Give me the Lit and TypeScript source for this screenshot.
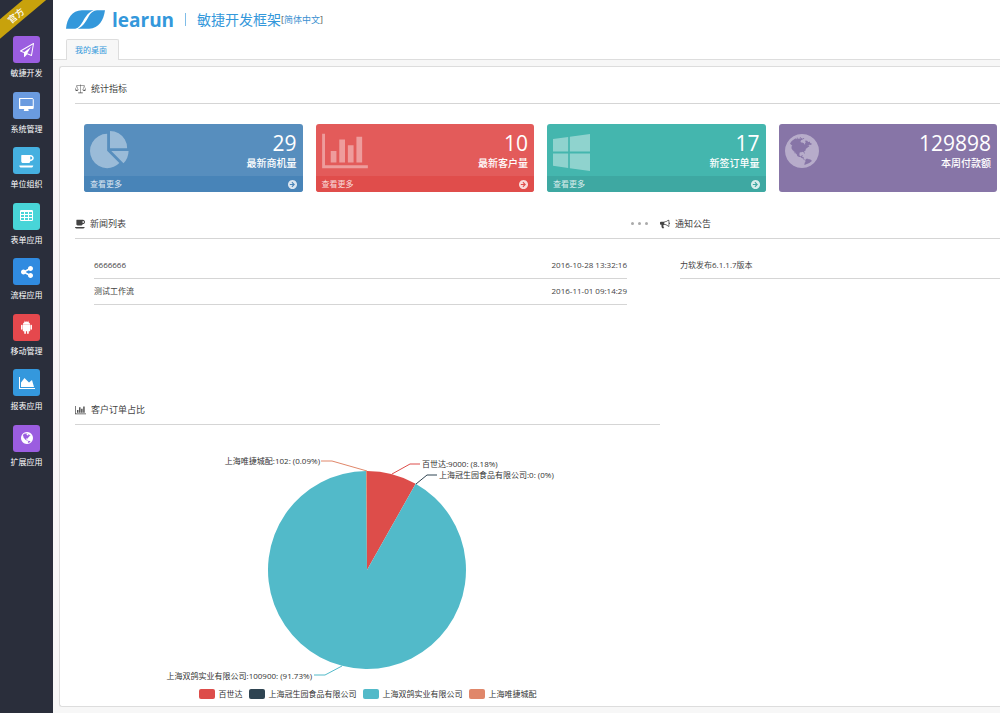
import { LitElement, html, css, svg, nothing } from "lit";
import { customElement, property } from "lit/decorators.js";

type Icon = { box: string; d: string };

const GLOBE =
  "M896 128q209 0 385.500 103t279.500 279.500 103 385.500-103 385.500-279.500 279.500-385.500 103-385.500-103-279.500-279.500-103-385.500 103-385.500 279.500-279.500 385.500-103zm274 521q-2 1-9.500 9.500t-13.500 9.500q2 0 4.500-5t5-11 3.500-7q6-7 22-15 14-6 52-12 34-8 51 11-2-2 9.500-13t14.500-12q3-2 15-4.500t15-7.500l2-22q-12 1-17.500-7t-6.500-21q0 2-6 8 0-7-4.500-8t-11.500 1-9 1q-10-3-15-7.500t-8-16.500-4-15q-2-5-9.500-11t-9.500-10q-1-2-2.500-5.500t-3-6.500-4-5.500-5.500-2.500-7 5-7.500 10-4.500 5q-3-2-6-1.500t-4.500 1-4.500 3-5 3.500q-3 2-8.500 3t-8.500 2q15-5-1-11-10-4-16-3 9-4 7.500-12t-8.500-14h5q-1-4-8.500-8.500t-17.500-8.500-13-6q-8-5-34-9.500t-33-.5q-5 6-4.500 10.500t4 14 3.500 12.500q1 6-5.500 13t-6.500 12q0 7 14 15.500t10 21.500q-3 8-16 16t-16 12q-5 8-1.500 18.500t10.500 16.500q2 2 1.500 4t-3.500 4.500-5.500 4-6.500 3.500l-3 2q-11 5-20.500-6t-13.500-26q-7-25-16-30-23-8-29 1-5-13-41-26-25-9-58-4 6-1 0-15-7-15-19-12 3-6 4-17.500t1-13.500q3-13 12-23 1-1 7-8.500t9.500-13.500.5-6q35 4 50-11 5-5 11.500-17t10.500-17q9-6 14-5.500t14.500 5.500 14.500 5q14 1 15.500-11t-7.500-20q12 1 3-17-4-7-8-9-12-4-27 5-8 4 2 8-1-1-9.500 10.500t-16.500 17.500-16-5q-1-1-5.500-13.500t-9.500-13.500q-8 0-16 15 3-8-11-15t-24-8q19-12-8-27-7-4-20.500-5t-19.500 4q-5 7-5.500 11.500t5 8 10.500 5.500 11.500 4 8.500 3q14 10 8 14-2 1-8.500 3.500t-11.500 4.500-6 4q-3 4 0 14t-2 14q-5-5-9-17.500t-7-16.500q7 9-25 6l-10-1q-4 0-16 2t-20.500 1-13.500-8q-4-8 0-20 1-4 4-2-4-3-11-9.500t-10-8.500q-46 15-94 41 6 1 12-1 5-2 13-6.500t10-5.500q34-14 42-7l5-5q14 16 20 25-7-4-30-1-20 6-22 12 7 12 5 18-4-3-11.500-10t-14.500-11-15-5q-16 0-22 1-146 80-235 222 7 7 12 8 4 1 5 9t2.500 11 11.500-3q9 8 3 19 1-1 44 27 19 17 21 21 3 11-10 18-1-2-9-9t-9-4q-3 5 .5 18.500t10.500 12.500q-7 0-9.500 16t-2.500 35.500-1 23.500l2 1q-3 12 5.500 34.500t21.500 19.500q-13 3 20 43 6 8 8 9 3 2 12 7.500t15 10 10 10.500q4 5 10 22.500t14 23.500q-2 6 9.500 20t10.500 23q-1 0-2.500 1t-2.500 1q3 7 15.500 14t15.500 13q1 3 2 10t3 11 8 2q2-20-24-62-15-25-17-29-3-5-5.500-15.500t-4.500-14.500q2 0 6 1.500t8.500 3.500 7.500 4 2 3q-3 7 2 17.500t12 18.500 17 19 12 13q6 6 14 19.500t0 13.500q9 0 20 10.500t17 19.500q5 8 8 26t5 24q2 7 8.500 13.500t12.500 9.500l16 8 13 7q5 2 18.500 10.500t21.500 11.500q10 4 16 4t14.500-2.500 13.500-3.500q15-2 29 15t21 21q36 19 55 11-2 1 .5 7.500t8 15.500 9 14.500 5.500 8.500q5 6 18 15t18 15q6-4 7-9-3 8 7 20t18 10q14-3 14-32-31 15-49-18 0-1-2.500-5.500t-4-8.500-2.500-8.500 0-7.500 5-3q9 0 10-3.500t-2-12.500-4-13q-1-8-11-20t-12-15q-5 9-16 8t-16-9q0 1-1.500 5.500t-1.500 6.500q-13 0-15-1 1-3 2.500-17.500t3.500-22.500q1-4 5.500-12t7.500-14.500 4-12.500-4.500-9.500-17.500-2.500q-19 1-26 20-1 3-3 10.500t-5 11.500-9 7q-7 3-24 2t-24-5q-13-8-22.500-29t-9.500-37q0-10 2.500-26.500t3-25-5.500-24.500q3-2 9-9.500t10-10.500q2-1 4.500-1.500t4.500 0 4-1.500 3-6q-1-1-4-3-3-3-4-3 7 3 28.500-1.500t27.500 1.500q15 11 22-2 0-1-2.500-9.500t-.5-13.500q5 27 29 9 3 3 15.500 5t17.500 5q3 2 7 5.500t5.500 4.500 5-.5 8.500-6.500q10 14 12 24 11 40 19 44 7 3 11 2t4.500-9.500 0-14-1.500-12.500l-1-8v-18l-1-8q-15-3-18.500-12t1.500-18.500 15-18.500q1-1 8-3.500t15.500-6.500 12.500-8q21-19 15-35 7 0 11-9-1 0-5-3t-7.500-5-4.500-2q9-5 2-16 5-3 7.500-11t7.500-10q9 12 21 2 8-8 1-16 5-7 20.500-10.500t18.500-9.500q7 2 8-2t1-12 3-12q4-5 15-9t13-5l17-11q3-4 0-4 18 2 31-11 10-11-6-20 3-6-3-9.500t-15-5.500q3-1 11.500-.5t10.500-1.500q15-10-7-16-17-5-43 12zm-163 877q206-36 351-189-3-3-12.500-4.500t-12.500-3.500q-18-7-24-8 1-7-2.500-13t-8-9-12.500-8-11-7q-2-2-7-6t-7-5.500-7.500-4.500-8.500-2-10 1l-3 1q-3 1-5.500 2.500t-5.500 3-4 3 0 2.500q-21-17-36-22-5-1-11-5.500t-10.500-7-10-1.500-11.500 7q-5 5-6 15t-2 13q-7-5 0-17.500t2-18.500q-3-6-10.500-4.500t-12 4.500-11.500 8.500-9 6.500-8.500 5.500-8.500 7.500q-3 4-6 12t-5 11q-2-4-11.500-6.500t-9.500-5.500q2 10 4 35t5 38q7 31-12 48-27 25-29 40-4 22 12 26 0 7-8 20.500t-7 21.500q0 6 2 16z";

const ICONS: Record<string, Icon> = {
  plane: {
    box: "0 0 1792 1792",
    d: "M1764 11q33 24 27 64l-256 1536q-5 29-32 45-14 8-31 8-11 0-24-5l-527-215-298 327q-18 21-47 21-14 0-23-4-19-7-30-23.500t-11-36.500v-452l-472-193q-37-14-40-55-3-39 32-59l1664-960q35-21 68 2zm-342 1499l221-1323-1434 827 336 137 863-639-478 797z",
  },
  desktop: {
    box: "0 0 1856 1792",
    d: "M1728 992v-832q0-13-9.500-22.500t-22.500-9.500h-1536q-13 0-22.500 9.500t-9.500 22.500v832q0 13 9.500 22.500t22.500 9.500h1536q13 0 22.500-9.500t9.500-22.500zm128-832v1088q0 66-47 113t-113 47h-544q0 37 16 77.500t32 71 16 43.500q0 26-19 45t-45 19h-512q-26 0-45-19t-19-45q0-14 16-44t32-70 16-78h-544q-66 0-113-47t-47-113v-1088q0-66 47-113t113-47h1536q66 0 113 47t47 113z",
  },
  coffee: {
    box: "0 0 1856 1792",
    d: "M1664 512q0-80-56-136t-136-56h-64v384h64q80 0 136-56t56-136zm-1664 960h1792q0 106-75 181t-181 75h-1280q-106 0-181-75t-75-181zm1856-960q0 159-112.500 271.500t-271.500 112.500h-64v32q0 92-66 158t-158 66h-704q-92 0-158-66t-66-158v-736q0-26 19-45t45-19h1152q159 0 271.500 112.500t112.500 271.500z",
  },
  table: {
    box: "64 0 1664 1792",
    d: "M224 128h1344q160 0 160 160v1088q0 160-160 160h-1344q-160 0-160-160v-1088q0-160 160-160zM192 384v256h384v-256zM704 384v256h384v-256zM1216 384v256h384v-256zM192 768v256h384v-256zM704 768v256h384v-256zM1216 768v256h384v-256zM192 1152v256h384v-256zM704 1152v256h384v-256zM1216 1152v256h384v-256z",
  },
  share: {
    box: "128 0 1536 1792",
    d: "M1344 1024q133 0 226.500 93.500t93.500 226.500-93.500 226.500-226.500 93.500-226.500-93.500-93.500-226.500q0-12 2-34l-360-180q-92 86-218 86-133 0-226.500-93.500t-93.500-226.500 93.500-226.500 226.500-93.500q126 0 218 86l360-180q-2-22-2-34 0-133 93.500-226.500t226.500-93.500 226.500 93.500 93.500 226.500-93.500 226.500-226.500 93.500q-126 0-218-86l-360 180q2 22 2 34t-2 34l360 180q92-86 218-86z",
  },
  android: {
    box: "192 0 1408 1792",
    d: "M420 590h952q-10-230-230-350l70-130-40-20-72 134q-98-46-204-46t-204 46l-72-134-40 20 70 130q-230 120-230 350zM420 620h952v710q0 110-110 110h-76v230q0 108-108 108t-108-108v-230h-148v230q0 108-108 108t-108-108v-230h-76q-110 0-110-110zM286 620q90 0 90 90v440q0 90-90 90t-90-90v-440q0-90 90-90zM1506 620q90 0 90 90v440q0 90-90 90t-90-90v-440q0-90 90-90z",
  },
  area: {
    box: "0 0 2048 1792",
    d: "M2048 1536v128h-2048v-1536h128v1408h1920zm-384-1024l256 896h-1664v-576l448-576 576 576z",
  },
  globe: { box: "128 0 1536 1792", d: GLOBE },
  pie: {
    box: "0 0 1792 1792",
    d: "M768 890l546 546q-106 108-247.500 168t-298.500 60q-209 0-385.500-103t-279.500-279.500-103-385.500 103-385.500 279.500-279.500 385.500-103v762zm187 6h773q0 157-60 298.500t-168 247.500zm709-128h-768v-768q209 0 385.500 103t279.500 279.500 103 385.500z",
  },
  bars: {
    box: "0 0 2048 1792",
    d: "M640 896v512h-256v-512h256zm384-512v1024h-256v-1024h256zm1024 1152v128h-2048v-1536h128v1408h1920zm-640-896v768h-256v-768h256zm384-384v1152h-256v-1152h256z",
  },
  windows: {
    box: "64 0 1664 1792",
    d: "M746 1006v651l-682-94v-557h682zm0-743v659h-682v-565zm982 743v786l-907-125v-661h907zm0-878v794h-907v-669z",
  },
  bullhorn: {
    box: "0 0 1792 1792",
    d: "M1664 640q53 0 90.500 37.500t37.500 90.500-37.500 90.500-90.500 37.500v384q0 52-38 90t-90 38q-417-347-812-380-58 19-91 66t-31 100.500 40 92.500q-20 33-23 65.500t6 58 33.500 55 48 50 61.500 50.500q-29 58-111.500 83t-168.500 11.500-132-55.500q-7-23-29.500-87.500t-32-94.500-23-89-15-101 3.500-98.500 22-110.500h-122q-66 0-113-47t-47-113v-192q0-66 47-113t113-47h480q435 0 896-384 52 0 90 38t38 90v384zm-128 604v-954q-394 302-768 343v270q377 42 768 341z",
  },
  scale: {
    box: "0 0 2048 1792",
    d: "M980 60h88v120h700v96h-20l292 780q-20 200-316 200t-316-200l284-780h-624v1290h380v100h-848v-100h380v-1290h-624l284 780q-20 200-316 200t-316-200l292-780h-20v-96h700zM324 380l-240 660h480zM1724 380l-240 660h480z",
  },
  arrow: {
    box: "128 128 1536 1536",
    d: "M896 128a768 768 0 1 0 1 0zM860 440l450 456-450 456-130-130 220-220h-510v-212h510l-220-220z",
  },
};

@customElement("fa-icon")
class FaIcon extends LitElement {
  @property() name = "";
  @property({ type: Number }) size = 14;

  static styles = css`
    :host { display: flex; }
    svg { display: block; fill: currentColor; fill-rule: evenodd; }
  `;

  render() {
    const icon = ICONS[this.name];
    if (!icon) return nothing;
    const [, , w, h] = icon.box.split(" ").map(Number);
    return html`<svg
      viewBox=${icon.box}
      width=${Math.round((this.size * w) / h)}
      height=${this.size}
      aria-hidden="true"
    ><path d=${icon.d}></path></svg>`;
  }
}

const MENU = [
  { icon: "plane", label: "敏捷开发", tone: "#9b5de0" },
  { icon: "desktop", label: "系统管理", tone: "#6a9be0" },
  { icon: "coffee", label: "单位组织", tone: "#45b0e0" },
  { icon: "table", label: "表单应用", tone: "#48d5d8" },
  { icon: "share", label: "流程应用", tone: "#308be0" },
  { icon: "android", label: "移动管理", tone: "#e5484d" },
  { icon: "area", label: "报表应用", tone: "#3498dd" },
  { icon: "globe", label: "扩展应用", tone: "#9b5de0" },
];

const CARDS = [
  { icon: "pie", value: "29", label: "最新商机量", tone: "blue", more: true },
  { icon: "bars", value: "10", label: "最新客户量", tone: "red", more: true },
  { icon: "windows", value: "17", label: "新签订单量", tone: "teal", more: true },
  { icon: "globe", value: "129898", label: "本周付款额", tone: "purple", more: false },
];

const NEWS = [
  { title: "6666666", time: "2016-10-28 13:32:16" },
  { title: "测试工作流", time: "2016-11-01 09:14:29" },
];

const SERIES = [
  { name: "百世达", color: "#dd4d4a" },
  { name: "上海冠生园食品有限公司", color: "#2f4452" },
  { name: "上海双鸽实业有限公司", color: "#52bac9" },
  { name: "上海唯捷城配", color: "#e0876a" },
];

@customElement("order-chart")
class OrderChart extends LitElement {
  static styles = css`
    :host { display: block; }
    .plot { display: block; width: 100%; height: 255px; overflow: visible; }
    .plot text { font-size: 8px; fill: #333; }
    .lead { fill: none; stroke-width: 1; }
    .legend {
      display: flex; justify-content: center; gap: 6px;
      margin: 0; padding: 8px 0 6px; list-style: none;
      font-size: 8px; line-height: 12px; color: #333;
    }
    .key { display: flex; align-items: center; gap: 4px; }
    .swatch { width: 16px; height: 10px; border-radius: 2px; }
  `;

  private slice(from: number, to: number, color: string) {
    const cx = 292, cy = 145, r = 99;
    const at = (f: number) => {
      const a = f * 2 * Math.PI;
      return `${(cx + r * Math.sin(a)).toFixed(2)} ${(cy - r * Math.cos(a)).toFixed(2)}`;
    };
    return svg`<path fill=${color}
      d=${`M${cx} ${cy}L${at(from)}A${r} ${r} 0 ${to - from > 0.5 ? 1 : 0} 1 ${at(to)}Z`}></path>`;
  }

  render() {
    const [red, dark, teal, orange] = SERIES.map((s) => s.color);
    return html`
      <svg class="plot" viewBox="0 0 585 255" role="img" aria-label="客户订单占比">
        ${this.slice(0, 0.0818, red)}
        ${this.slice(0.0818, 0.9991, teal)}
        ${this.slice(0.9985, 1, orange)}
        <path class="lead" stroke=${orange} d="M246 36h11l35 10"></path>
        <path class="lead" stroke=${red} d="M317 49l18-10h10"></path>
        <path class="lead" stroke=${dark} d="M341 59l11-9h10"></path>
        <path class="lead" stroke=${teal} d="M239 250h11l17-9"></path>
        <text x="245" y="39" text-anchor="end">上海唯捷城配:102: (0.09%)</text>
        <text x="347" y="42">百世达:9000: (8.18%)</text>
        <text x="364" y="53">上海冠生园食品有限公司:0: (0%)</text>
        <text x="237" y="254" text-anchor="end">上海双鸽实业有限公司:100900: (91.73%)</text>
      </svg>
      <ul class="legend">
        ${SERIES.map(
          (s) => html`<li class="key">
            <span class="swatch" style="background:${s.color}"></span>${s.name}
          </li>`
        )}
      </ul>
    `;
  }
}

@customElement("app-root")
class AppRoot extends LitElement {
  static styles = css`
    :host {
      display: flex; min-height: 100vh; overflow: hidden;
      font-family: "Open Sans", "Noto Sans CJK SC", sans-serif;
      font-size: 8px; line-height: 12px; color: #444; background: #f7f7f7;
    }
    * { box-sizing: border-box; }
    a { color: inherit; text-decoration: none; }
    button { padding: 0; border: 0; background: none; font: inherit; color: inherit; }

    .side {
      position: relative; flex: none; width: 53px; padding-top: 36px;
      overflow: hidden; background: #2a2e3b; color: #fff;
    }
    .ribbon {
      position: absolute; left: -24px; top: 8px; width: 80px; height: 15px;
      transform: rotate(-40deg); background: #c8a20c;
      font-size: 9px; line-height: 15px; font-weight: 500; text-align: center;
    }
    .menu { display: grid; grid-auto-rows: 1fr; height: 444px; }
    .entry { display: flex; flex-direction: column; align-items: center; gap: 4px; }
    .tile {
      display: flex; align-items: center; justify-content: center;
      width: 27px; height: 27px; border-radius: 3px;
    }

    .main { flex: 1; min-width: 0; display: flex; flex-direction: column; }
    .top { background: #fff; border-bottom: 1px solid #ddd; padding-left: 13px; }
    .brand { display: flex; align-items: center; height: 39px; color: #3498db; }
    .mark { display: block; width: 39px; height: 19px; fill: currentColor; }
    .name { margin: 0 0 0 7px; font-size: 19px; line-height: 24px; font-weight: 700; }
    .rule { width: 1px; height: 13px; margin: 0 11px; background: #7fbde8; }
    .product { font-size: 14px; line-height: 20px; }
    .lang { font-size: 9px; line-height: 14px; color: #555; }
    .lang a { color: #3b8fd0; }
    .tabs { display: flex; margin-bottom: -1px; }
    .tab {
      height: 21px; padding: 0 11px 0 8px; border: 1px solid #ddd; border-bottom: 0;
      border-radius: 2px 2px 0 0; background: #f7f7f7; color: #3498db; line-height: 20px;
    }

    .panel {
      flex: 1; margin: 6px 0 6px 6px; padding: 7px 0 0 15px;
      border: 1px solid #ddd; border-right: 0; border-radius: 3px 0 0 3px; background: #fff;
    }
    .title {
      display: flex; align-items: center; gap: 5px; height: 30px;
      border-bottom: 1px solid #d5d5d5;
    }
    .title h2 { margin: 0; font-size: 9px; line-height: 14px; font-weight: 400; }
    .dots { display: flex; gap: 4px; margin-left: auto; margin-right: 12px; padding: 4px 0; }
    .dot { width: 3px; height: 3px; border-radius: 2px; background: #aaa; }

    .cards {
      display: grid; grid-template-columns: repeat(4, 1fr); gap: 13px;
      padding: 20px 3px 17px 9px;
    }
    .card {
      display: flex; flex-direction: column; overflow: hidden;
      border-radius: 3px; color: #fff; min-height: 68px;
    }
    .body { display: flex; justify-content: space-between; height: 52px; padding: 7px 6px 0; }
    .glyph { opacity: 0.4; }
    .figures { text-align: right; }
    .value { font-size: 21px; line-height: 24px; }
    .label { font-size: 10px; line-height: 16px; font-weight: 500; }
    .more {
      display: flex; align-items: center; justify-content: space-between;
      height: 16px; padding: 0 6px; color: #ffffffcc;
    }
    .blue { background: #578ebe; }
    .blue .more { background: #4884b8; }
    .red { background: #e35b5a; }
    .red .more { background: #e04d4b; }
    .teal { background: #44b6ae; }
    .teal .more { background: #3ea8a2; }
    .purple { background: #8775a7; }

    .columns { display: grid; grid-template-columns: 585fr 340fr; }
    .feed { min-height: 156px; margin: 0; padding: 14px 33px 0 19px; list-style: none; }
    .notice { padding: 14px 0 0 20px; }
    .feed li {
      display: flex; align-items: center; justify-content: space-between;
      height: 26px; padding-bottom: 2px; border-bottom: 1px solid #d5d5d5;
    }
  `;

  private title(icon: string, text: string, dots = false) {
    return html`<div class="title">
      <fa-icon name=${icon} size="10"></fa-icon>
      <h2>${text}</h2>
      ${dots
        ? html`<button class="dots" aria-label="更多">
            <span class="dot"></span><span class="dot"></span><span class="dot"></span>
          </button>`
        : nothing}
    </div>`;
  }

  render() {
    return html`
      <aside class="side">
        <div class="ribbon">官方</div>
        <nav class="menu">
          ${MENU.map(
            (m) => html`<a class="entry" href="#">
              <span class="tile" style="background:${m.tone}">
                <fa-icon name=${m.icon} size="14"></fa-icon>
              </span>
              <span>${m.label}</span>
            </a>`
          )}
        </nav>
      </aside>
      <div class="main">
        <header class="top">
          <div class="brand">
            <svg class="mark" viewBox="198 29 118 55" preserveAspectRatio="none" aria-hidden="true">
              <path d="M198 83C201 55 216 30 246 30H282C266 35 258 48 249 62C241 75 234 83 222 83Z"></path>
              <path d="M316 30C312 58 298 83 268 83H234C249 77 256 65 264 52C272 38 281 30 292 30Z"></path>
            </svg>
            <h1 class="name">learun</h1>
            <span class="rule"></span>
            <span class="product">敏捷开发框架</span>
            <span class="lang">[<a href="#">简体中文</a>]</span>
          </div>
          <div class="tabs"><button class="tab">我的桌面</button></div>
        </header>
        <main class="panel">
          ${this.title("scale", "统计指标")}
          <div class="cards">
            ${CARDS.map(
              (c) => html`<section class="card ${c.tone}">
                <div class="body">
                  <fa-icon class="glyph" name=${c.icon} size="40"></fa-icon>
                  <div class="figures">
                    <div class="value">${c.value}</div>
                    <div class="label">${c.label}</div>
                  </div>
                </div>
                ${c.more
                  ? html`<a class="more" href="#">查看更多<fa-icon name="arrow" size="9"></fa-icon></a>`
                  : nothing}
              </section>`
            )}
          </div>
          <div class="columns">
            <section>
              ${this.title("coffee", "新闻列表", true)}
              <ul class="feed">
                ${NEWS.map((n) => html`<li><a href="#">${n.title}</a><time>${n.time}</time></li>`)}
              </ul>
            </section>
            <section>
              ${this.title("bullhorn", "通知公告")}
              <ul class="feed notice"><li><a href="#">力软发布6.1.1.7版本</a></li></ul>
            </section>
            <section>
              ${this.title("bars", "客户订单占比")}
              <order-chart></order-chart>
            </section>
          </div>
        </main>
      </div>
    `;
  }
}
